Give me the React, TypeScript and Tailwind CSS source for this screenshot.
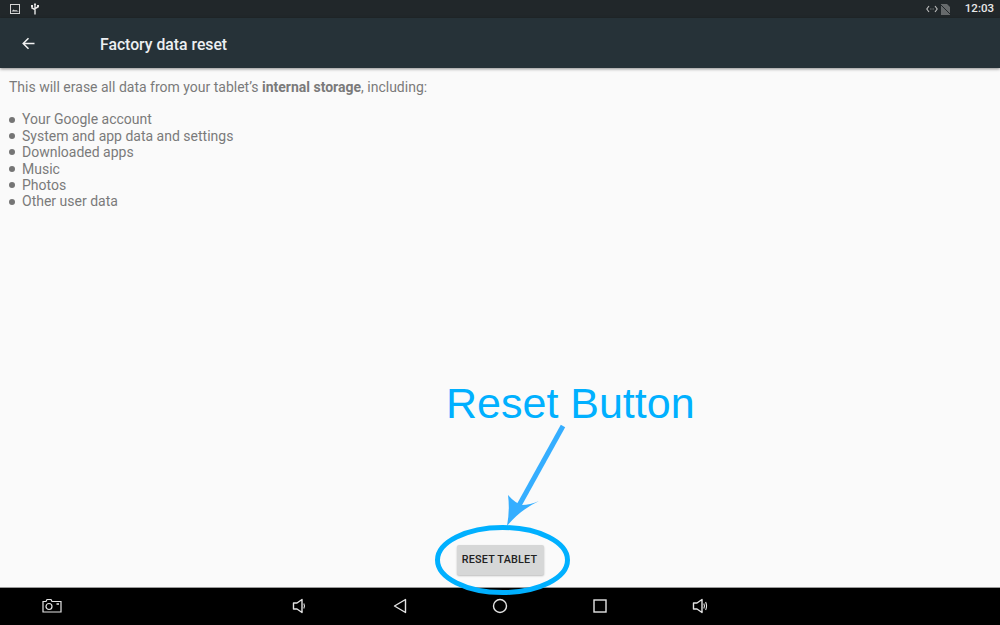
const items = ["Your Google account", "System and app data and settings", "Downloaded apps", "Music", "Photos", "Other user data"];

function Speaker({ loud }: { loud?: boolean }) {
  return (
    <svg width="16" height="16" viewBox="0 0 16 16" fill="none" stroke="#e4e4e4" strokeWidth="1.4">
      <path d="M1.5 5h3.5l5-3.5v13l-5-3.5h-3.5z" strokeLinejoin="round" />
      <path d="M11.8 5.5c.8 1.5.8 3.5 0 5" strokeWidth="1.1" />
      {loud && <path d="M13.6 4c1.2 2.5 1.2 5.500 0 8" strokeWidth="1.1" />}
    </svg>
  );
}

export default function App() {
  return (
    <div className="relative flex h-[625px] w-[1000px] flex-col overflow-hidden bg-[#fafafa] font-['Roboto',sans-serif]">
      <div className="flex h-[18px] items-center justify-between bg-[#21272a] pl-[10px] pr-[6px]">
        <div className="flex items-center gap-[10px]">
          <svg width="10" height="10" viewBox="0 0 10 10" fill="none">
            <rect x="0.5" y="0.5" width="9" height="9" stroke="#d5d5d5" />
            <path d="M1.500 7.500l2-2 1.500 1 1-.5 3 1.500z" fill="#d5d5d5" />
          </svg>
          <svg width="10" height="12" viewBox="0 0 10 12" fill="none" stroke="#e8e8e8" strokeWidth="1.400">
            <path d="M5 .5v11M2 3.500v1.500l3 1.500M8 3.500v.5L5 5.500" />
            <path d="M3.800 2L5 .3 6.200 2z" fill="#e8e8e8" stroke="none" />
            <rect x="1" y="2" width="2" height="2" fill="#e8e8e8" stroke="none" />
            <rect x="7" y="2" width="2" height="2" fill="#e8e8e8" stroke="none" />
          </svg>
        </div>
        <div className="flex items-center">
          <svg width="12" height="8" viewBox="0 0 12 8" fill="none" stroke="#bdbdbd" strokeWidth="1.100">
            <path d="M3 1L.8 4 3 7M9 1l2.200 3L9 7" />
            <path d="M4.500 4h.8M6.700 4h.8" />
          </svg>
          <svg className="ml-[3px]" width="9" height="11" viewBox="0 0 9 11">
            <path d="M0 0h6l3 3v8H0z" fill="#666a6c" />
            <path d="M0 1l9 9" stroke="#21272a" strokeWidth="1" />
          </svg>
          <span className="ml-[15px] text-[11.500px] font-medium leading-none text-[#e8e8e8]">12:03</span>
        </div>
      </div>

      <div className="z-10 flex h-[50px] items-center bg-[#263238] shadow-[0_1px_3px_rgba(0,0,0,0.45)]">
        <svg className="ml-[22px]" width="13" height="13" viewBox="0 0 13 13" fill="none" stroke="#f2f2f2" strokeWidth="1.500">
          <path d="M12.500 6.500H1.500M6.500 1.200L1.200 6.500l5.300 5.300" />
        </svg>
        <span className="ml-[65px] pt-[4px] text-[15.750px] font-medium text-[#eceff1]">Factory data reset</span>
      </div>

      <div className="flex-1 px-[9px] pt-[11px] text-[14px] leading-[16.400px] text-[#7a7a7a]">
        <p>
          This will erase all data from your tablet’s <b className="font-bold">internal storage</b>, including:
        </p>
        <ul className="mt-[16px]">
          {items.map((item) => (
            <li key={item} className="flex items-center">
              <span className="mr-[7px] h-[6px] w-[6px] rounded-full bg-[#757575]" />
              {item}
            </li>
          ))}
        </ul>
      </div>

      <div className="flex justify-center pb-[12px] pl-[1px]">
        <button className="h-[30px] w-[87px] rounded-[2px] bg-[#d6d7d7] pr-[2px] text-[10.800px] font-medium tracking-[0.2px] text-[#212121] shadow-[0_1px_2px_rgba(0,0,0,0.25)]">
          RESET TABLET
        </button>
      </div>

      <div className="flex h-[38px] items-center border-t border-[#9a9a9a] bg-black pb-[2px]">
        <div className="flex w-[100px] justify-center pl-[3px]">
          <svg width="20" height="15" viewBox="0 0 20 15" fill="none" stroke="#e4e4e4" strokeWidth="1.200">
            <path d="M1 3.500h3l1-2h4l1 2h9v10.500H1z" />
            <circle cx="7" cy="8.500" r="3" />
            <path d="M14.500 6h2.500" strokeWidth="1.500" />
          </svg>
        </div>
        <div className="w-[150px]" />
        <div className="flex w-[100px] justify-center"><Speaker /></div>
        <div className="flex w-[100px] justify-center">
          <svg width="14" height="16" viewBox="0 0 14 16" fill="none" stroke="#e4e4e4" strokeWidth="1.400">
            <path d="M12.500 1.500v13L1.500 8z" strokeLinejoin="round" />
          </svg>
        </div>
        <div className="flex w-[100px] justify-center">
          <svg width="16" height="16" viewBox="0 0 16 16" fill="none" stroke="#e4e4e4" strokeWidth="1.400">
            <circle cx="8" cy="8" r="6.500" />
          </svg>
        </div>
        <div className="flex w-[100px] justify-center">
          <svg width="14" height="14" viewBox="0 0 14 14" fill="none" stroke="#e4e4e4" strokeWidth="1.400">
            <rect x="1" y="1" width="12" height="12" />
          </svg>
        </div>
        <div className="flex w-[100px] justify-center"><Speaker loud /></div>
      </div>

      <span className="absolute left-[446px] top-[377px] font-['Liberation_Sans',sans-serif] text-[43px] leading-[52px] text-[#00b0ff]">
        Reset Button
      </span>
      <svg className="absolute left-[430px] top-[420px]" width="145" height="180" viewBox="430 420 145 180" fill="none">
        <path d="M563 426L517 509" stroke="#35aeff" strokeWidth="5" />
        <path d="M508 495Q515 503 522 505Q530 505 539 501Q520 510 507 526Q510 510 508 495z" fill="#35aeff" />
        <ellipse cx="502.500" cy="560" rx="65" ry="32.500" stroke="#00b0ff" strokeWidth="5" />
      </svg>
    </div>
  );
}
